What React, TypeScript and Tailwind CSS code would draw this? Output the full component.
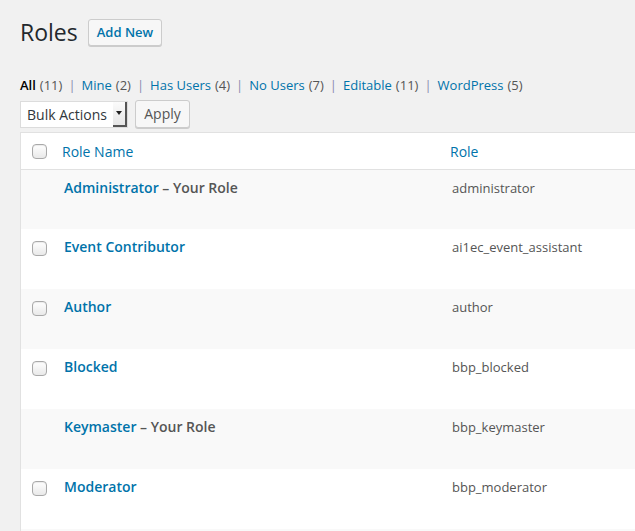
import React from "react";

const rows = [
  { name: "Administrator", you: true, role: "administrator", cb: false },
  { name: "Event Contributor", you: false, role: "ai1ec_event_assistant", cb: true },
  { name: "Author", you: false, role: "author", cb: true },
  { name: "Blocked", you: false, role: "bbp_blocked", cb: true },
  { name: "Keymaster", you: true, role: "bbp_keymaster", cb: false },
  { name: "Moderator", you: false, role: "bbp_moderator", cb: true },
];

function Checkbox() {
  return (
    <div className="w-[15px] h-[15px] rounded-[4px] border border-[#a9a9a9] bg-gradient-to-b from-white to-[#e9e9e9] shadow-[inset_0_1px_1px_rgba(0,0,0,0.08)]" />
  );
}

const filters = [
  { label: "All", count: 11, current: true },
  { label: "Mine", count: 2 },
  { label: "Has Users", count: 4 },
  { label: "No Users", count: 7 },
  { label: "Editable", count: 11 },
  { label: "WordPress", count: 5 },
];

export default function App() {
  return (
    <div
      className="w-full h-[531px] overflow-hidden bg-[#f1f1f1] text-[#444]"
      style={{ fontFamily: '"Open Sans", "Noto Sans", sans-serif' }}
    >
      <div className="pl-5 pt-[18px]">
        <div className="flex items-center">
          <h1 className="text-[23px] leading-[29px] text-[#23282d] font-normal">Roles</h1>
          <button className="ml-[10px] h-[27px] px-[8px] rounded-[3px] border border-[#cccccc] bg-[#f7f7f7] text-[13px] font-semibold text-[#0073aa] leading-[25px] shadow-[0_1px_0_#cccccc]">
            Add New
          </button>
        </div>

        <div className="mt-[28px] flex items-center text-[13px] leading-[20px] h-[20px]">
          {filters.map((f, i) => (
            <span key={f.label} className="flex items-center">
              {i > 0 && <span className="mx-[6px] text-[#8a8ab0]">|</span>}
              <span className={f.current ? "text-black font-semibold" : "text-[#0073aa]"}>{f.label}</span>
              <span className="ml-[4px] text-[#555]">({f.count})</span>
            </span>
          ))}
        </div>

        <div className="mt-[5px] flex items-center h-[28px]">
          <div className="flex h-[27px] w-[108px] border border-[#dcdcdc] bg-white">
            <div className="flex-1 pl-[6px] text-[14px] leading-[25px] text-[#32373c]">Bulk Actions</div>
            <div className="w-[14px] h-full bg-gradient-to-b from-[#fbfbfb] to-[#e6e6e6] border-r-2 border-b-2 border-[#555] flex items-center justify-center">
              <svg width="6" height="4" viewBox="0 0 6 4">
                <path d="M0 0h6L3 4z" fill="#222" />
              </svg>
            </div>
          </div>
          <button className="ml-[7px] h-[28px] w-[55px] rounded-[3px] border border-[#cccccc] bg-[#f7f7f7] text-[14px] text-[#555] leading-[26px] shadow-[0_1px_0_#cccccc]">
            Apply
          </button>
        </div>

        <div className="mt-[4px] w-[700px] bg-white border-l border-t border-[#e1e1e1]">
          <div className="flex h-[37px] items-center border-b border-[#e1e1e1]">
            <div className="w-[43px] shrink-0 pl-[11px]">
              <Checkbox />
            </div>
            <div className="w-[388px] shrink-0 -ml-[2px] text-[14px] text-[#0073aa]">Role Name</div>
            <div className="text-[14px] text-[#0073aa]">Role</div>
          </div>
          {rows.map((r, i) => (
            <div
              key={r.name}
              className={`flex ${i % 2 === 0 ? "bg-[#f9f9f9]" : "bg-white"} ${i === 0 ? "h-[59px]" : "h-[60px]"}`}
            >
              <div className="w-[43px] shrink-0 pl-[11px] pt-[12px]">{r.cb && <Checkbox />}</div>
              <div className="w-[388px] shrink-0 pt-[7px] text-[14px] leading-[21px] font-semibold">
                <span className="text-[#0073aa]">{r.name}</span>
                {r.you && <span className="text-[#555]"> – Your Role</span>}
              </div>
              <div className="pt-[8px] text-[13px] leading-[20px] text-[#555]">{r.role}</div>
            </div>
          ))}
          <div className="h-[60px] bg-[#f9f9f9]" />
        </div>
      </div>
    </div>
  );
}
